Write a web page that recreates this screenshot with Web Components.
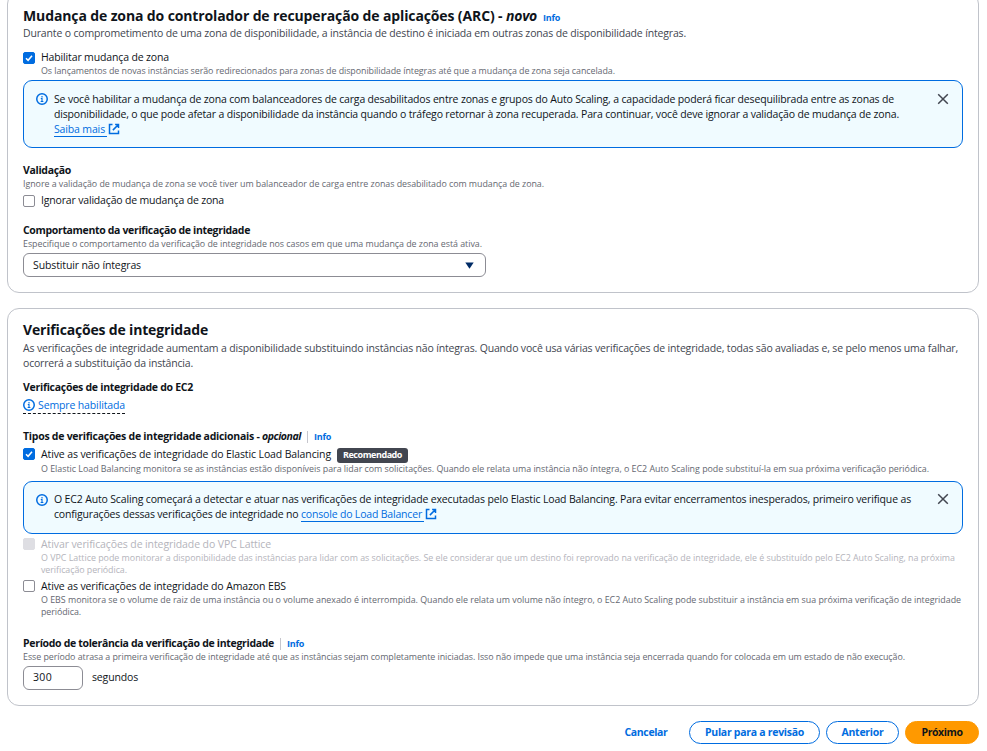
<!DOCTYPE html>
<html lang="pt-BR">
<head>
<meta charset="utf-8">
<title>Integrar a outros serviços</title>
<style>
html,body{margin:0;height:751px;overflow:hidden;background:#fff}
body{font-family:"Open Sans","Noto Sans",sans-serif;font-size:10.5px;line-height:15px;color:#0f141a}
</style>
</head>
<body>
<wizard-page></wizard-page>
<script>
const define = (name, html, ready) => customElements.define(name, class extends HTMLElement {
  constructor() {
    super();
    const t = document.createElement('template');
    t.innerHTML = html;
    this.attachShadow({ mode: 'open' }).appendChild(t.content.cloneNode(true));
  }
  connectedCallback() { if (ready) ready(this, this.shadowRoot); }
});

/* One line of text, tracked so that it fills the width given in "w". */
define('text-line', `<style>
:host{display:inline-block;white-space:pre;vertical-align:top;line-height:inherit}
:host([kind=small]){font-size:8.9px;line-height:12px;color:#656871}
:host([kind=sub]){color:#424650}
:host([kind=bold]){font-weight:700}
:host([kind=title]){font-weight:700;font-size:14px;line-height:18px}
:host([kind=info]){font-weight:700;font-size:9px;color:#006ce0}
:host([kind=off]){color:#b4b4bb}
:host([kind=offsmall]){font-size:8.9px;line-height:12px;color:#b4b4bb}
:host([italic]){font-style:italic}
span{display:inline-block}
</style><span><slot></slot></span>`, (el, root) => {
  const w = +el.getAttribute('w'), s = root.querySelector('span');
  const n = el.textContent.length;
  const natural = s.getBoundingClientRect().width;
  el.style.width = w + 'px';
  s.style.letterSpacing = ((w - natural) / n).toFixed(4) + 'px';
});

define('info-icon', `<style>:host{display:block;width:12px;height:12px}svg{display:block}</style>
<svg width="12" height="12" viewBox="0 0 16 16" fill="none" stroke="#006ce0" stroke-width="2"><circle cx="8" cy="8" r="7"/><path d="M8 11.6V7.4H6.4M8 4v2M6.2 11.4h3.6" stroke-width="1.5"/></svg>`);

define('external-icon', `<style>:host{display:block;width:12px;height:12px}svg{display:block}</style>
<svg width="12" height="12" viewBox="0 0 16 16" fill="none" stroke="#006ce0" stroke-width="2"><path d="M6 2H2v12h12v-4M9.5 2H14v4.5M6.5 9.5 14 2"/></svg>`);

define('close-icon', `<style>:host{display:block;width:12px;height:12px}svg{display:block}</style>
<svg width="12" height="12" viewBox="0 0 12 12" fill="none" stroke="#424650" stroke-width="1.5"><path d="M1.2 1.2l9.6 9.6M10.8 1.2l-9.6 9.6"/></svg>`);

define('panel-card', `<style>
:host{display:flex;flex-direction:column;align-items:stretch;box-sizing:border-box;border:1px solid #c0c3ca;border-radius:12px;padding:12px 15px 15px;background:#fff}
</style><slot></slot>`);

define('flash-box', `<style>
:host{display:grid;grid-template-columns:18px 1fr 12px;box-sizing:border-box;border:1px solid #006ce0;border-radius:9px;background:#f0fbff;padding:11px 13px 11px 12px}
:host([compact]){padding-top:10px}
info-icon{margin-top:1px}close-icon{margin-top:1px}
:host([compact]) info-icon{margin-top:2px}
div{display:flex;flex-direction:column}
</style><info-icon></info-icon><div><slot></slot></div><close-icon></close-icon>`);

define('ext-link', `<style>
:host{display:inline-flex;color:#006ce0;gap:1px;height:15px}
span{border-bottom:1px solid #006ce0;height:14px;padding-right:2px}
external-icon{margin-top:1px}
</style><span><slot></slot></span><external-icon></external-icon>`);

define('check-box', `<style>
:host{display:grid;grid-template-columns:12px 1fr;column-gap:6px}
i{box-sizing:border-box;width:12px;height:12px;margin-top:2px;border:1px solid #8c8c94;border-radius:2px;background:#fff}
:host([high]) i{margin-top:1px}
:host([checked]) i{background:#006ce0;border-color:#006ce0}
:host([disabled]) i{background:#dedee3;border-color:#dedee3}
svg{display:none;width:10px;height:10px}
:host([checked]) svg{display:block}
div{display:flex;height:15px}
section{grid-column:2;display:flex;flex-direction:column}
</style><i><svg viewBox="0 0 10 10" fill="none" stroke="#fff" stroke-width="1.5"><path d="M2 5.2 4.1 7.3 8 2.8"/></svg></i><div><slot></slot></div><section><slot name="desc"></slot></section>`);

define('tag-badge', `<style>
:host{display:inline-block;box-sizing:border-box;width:71px;height:15px;margin:1px 0 0 6px;padding-left:6px;border-radius:3px;background:#424650;color:#fff;font-size:9px;font-weight:700;line-height:14px}
</style><slot></slot>`);

define('field-label', `<style>
:host{display:flex;height:15px}
</style><slot></slot>`);
define('side-info', `<style>
:host{display:inline-flex;margin-left:6px;padding-left:6px;height:12px;margin-top:2px;line-height:11px;border-left:1px solid #c6c6cd}
</style><text-line kind="info" w="17">Info</text-line>`);

define('input-box', `<style>
:host{display:flex;justify-content:space-between;align-items:center;box-sizing:border-box;height:24px;padding:0 11px 0 9px;border:1px solid #8c8c94;border-radius:6px;background:#fff}
</style><slot></slot>`);
define('caret-icon', `<style>:host{display:block;width:9px;height:7px}svg{display:block}</style><svg width="9" height="7" viewBox="0 0 9 7"><path d="M.3.5h8.4L4.5 6.8z" fill="#002b66"/></svg>`);

define('pill-button', `<style>
:host{display:flex;justify-content:center;align-items:center;box-sizing:border-box;height:23px;padding-bottom:1px;border:1px solid #006ce0;border-radius:12px;color:#006ce0}
:host([variant=link]){border-color:transparent}
:host([variant=primary]){background:#ff9900;border-color:#ff9900;color:#0f141a}
</style><slot></slot>`);

define('status-hint', `<style>
:host{display:inline-flex;align-self:flex-start;gap:3px;height:16px;line-height:17px;color:#006ce0;border-bottom:1px dashed #0f141a}
info-icon{margin-top:2px}
</style><info-icon></info-icon><slot></slot>`);

define('wizard-page', `<style>
:host{display:block;width:987px;height:751px;overflow:hidden}
main{display:flex;flex-direction:column;gap:15px;padding:0 8px 0 7px;margin-top:-8px}
.row{display:flex}
.sp2{margin-top:2px}.sp3{margin-top:3px}
footer{display:flex}
</style>
<main>
<panel-card style="padding-top:14px">
  <div class="row" style="height:19px"><text-line kind="title" w="483">Mudança de zona do controlador de recuperação de aplicações (ARC) - </text-line><text-line kind="title" italic w="31">novo</text-line><text-line kind="info" w="17" style="margin:3px 0 0 6px">Info</text-line></div>
  <text-line kind="sub" w="663">Durante o comprometimento de uma zona de disponibilidade, a instância de destino é iniciada em outras zonas de disponibilidade íntegras.</text-line>
  <check-box checked style="margin-top:9px"><text-line w="128">Habilitar mudança de zona</text-line><text-line slot="desc" kind="small" w="574">Os lançamentos de novas instâncias serão redirecionados para zonas de disponibilidade íntegras até que a mudança de zona seja cancelada.</text-line></check-box>
  <flash-box class="sp3" style="height:68px">
    <text-line w="840">Se você habilitar a mudança de zona com balanceadores de carga desabilitados entre zonas e grupos do Auto Scaling, a capacidade poderá ficar desequilibrada entre as zonas de</text-line>
    <text-line w="845">disponibilidade, o que pode afetar a disponibilidade da instância quando o tráfego retornar à zona recuperada. Para continuar, você deve ignorar a validação de mudança de zona.</text-line>
    <ext-link><text-line w="51">Saiba mais</text-line></ext-link>
  </flash-box>
  <field-label style="margin-top:15px"><text-line kind="bold" w="48">Validação</text-line></field-label>
  <text-line kind="small" w="521">Ignore a validação de mudança de zona se você tiver um balanceador de carga entre zonas desabilitado com mudança de zona.</text-line>
  <check-box class="sp3"><text-line w="183">Ignorar validação de mudança de zona</text-line></check-box>
  <field-label style="margin-top:15px"><text-line kind="bold" w="227">Comportamento da verificação de integridade</text-line></field-label>
  <text-line kind="small" w="459">Especifique o comportamento da verificação de integridade nos casos em que uma mudança de zona está ativa.</text-line>
  <input-box class="sp3" style="width:463px"><text-line w="108">Substituir não íntegras</text-line><caret-icon></caret-icon></input-box>
</panel-card>

<panel-card>
  <text-line kind="title" w="185">Verificações de integridade</text-line>
  <text-line kind="sub" class="sp2" w="935">As verificações de integridade aumentam a disponibilidade substituindo instâncias não íntegras. Quando você usa várias verificações de integridade, todas são avaliadas e, se pelo menos uma falhar,</text-line>
  <text-line kind="sub" w="170">ocorrerá a substituição da instância.</text-line>
  <field-label style="margin-top:9px"><text-line kind="bold" w="170">Verificações de integridade do EC2</text-line></field-label>
  <status-hint class="sp2"><text-line w="87">Sempre habilitada</text-line></status-hint>
  <field-label style="margin-top:15px"><text-line kind="bold" w="239">Tipos de verificações de integridade adicionais - </text-line><text-line kind="bold" italic w="39">opcional</text-line><side-info></side-info></field-label>
  <check-box high checked class="sp3"><text-line w="290">Ative as verificações de integridade do Elastic Load Balancing</text-line><tag-badge><text-line w="59">Recomendado</text-line></tag-badge><text-line slot="desc" kind="small" w="888" style="margin-top:1px">O Elastic Load Balancing monitora se as instâncias estão disponíveis para lidar com solicitações. Quando ele relata uma instância não íntegra, o EC2 Auto Scaling pode substituí-la em sua próxima verificação periódica.</text-line></check-box>
  <flash-box compact style="margin-top:6px;height:53px">
    <text-line w="857">O EC2 Auto Scaling começará a detectar e atuar nas verificações de integridade executadas pelo Elastic Load Balancing. Para evitar encerramentos inesperados, primeiro verifique as</text-line>
    <div class="row"><text-line w="247">configurações dessas verificações de integridade no </text-line><ext-link><text-line w="121">console do Load Balancer</text-line></ext-link></div>
  </flash-box>
  <check-box high disabled class="sp3"><text-line kind="off" w="230">Ativar verificações de integridade do VPC Lattice</text-line><text-line slot="desc" kind="offsmall" w="914">O VPC Lattice pode monitorar a disponibilidade das instâncias para lidar com as solicitações. Se ele considerar que um destino foi reprovado na verificação de integridade, ele é substituído pelo EC2 Auto Scaling, na próxima</text-line><text-line slot="desc" kind="offsmall" w="86">verificação periódica.</text-line></check-box>
  <check-box high class="sp3"><text-line w="245">Ative as verificações de integridade do Amazon EBS</text-line><text-line slot="desc" kind="small" w="920">O EBS monitora se o volume de raiz de uma instância ou o volume anexado é interrompida. Quando ele relata um volume não íntegro, o EC2 Auto Scaling pode substituir a instância em sua próxima verificação de integridade</text-line><text-line slot="desc" kind="small" w="40">periódica.</text-line></check-box>
  <field-label style="margin-top:18px"><text-line kind="bold" w="251">Período de tolerância da verificação de integridade</text-line><side-info></side-info></field-label>
  <text-line kind="small" w="882">Esse período atrasa a primeira verificação de integridade até que as instâncias sejam completamente iniciadas. Isso não impede que uma instância seja encerrada quando for colocada em um estado de não execução.</text-line>
  <div class="row sp3" style="gap:9px"><input-box style="width:60px;padding-bottom:1px"><text-line w="19">300</text-line></input-box><text-line w="46" style="margin-top:4px">segundos</text-line></div>
</panel-card>

<footer style="justify-content:flex-end;gap:6px">
  <pill-button variant="link" style="width:76px;margin-right:-1px"><text-line kind="bold" w="43">Cancelar</text-line></pill-button>
  <pill-button style="width:131px"><text-line kind="bold" w="99">Pular para a revisão</text-line></pill-button>
  <pill-button style="width:73px"><text-line kind="bold" w="42">Anterior</text-line></pill-button>
  <pill-button variant="primary" style="width:74px"><text-line kind="bold" w="41">Próximo</text-line></pill-button>
</footer>
</main>`);
</script>
</body>
</html>
